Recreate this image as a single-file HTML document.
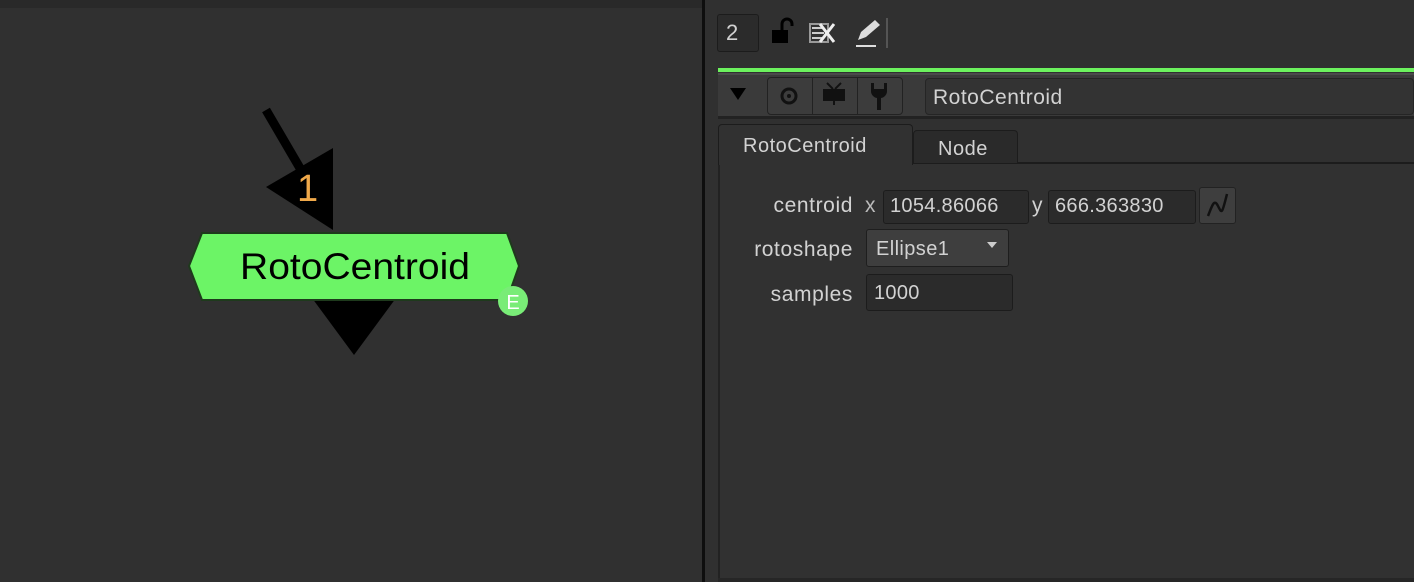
<!DOCTYPE html>
<html><head><style>
*{margin:0;padding:0;box-sizing:border-box}
body{width:1414px;height:582px;background:#303030;position:relative;overflow:hidden;font-family:"Liberation Sans",sans-serif}
.a{position:absolute}
.t{color:#d2d2d2;font-size:21px;letter-spacing:0.6px}
.lab{position:absolute;right:561px;color:#d2d2d2;font-size:21px;letter-spacing:0.6px;text-align:right}
.f{position:absolute;background:#2b2b2b;border:1px solid #1c1c1c;border-radius:3px;color:#d2d2d2;font-size:20px;padding-left:6px;line-height:30px;white-space:nowrap;overflow:hidden;letter-spacing:0.3px}
</style></head><body>
<div class="a" style="left:0;top:0;width:702px;height:8px;background:#292929"></div>
<div class="a" style="left:702px;top:0;width:3px;height:582px;background:#0e0e0e"></div>
<svg class="a" style="left:0;top:0" width="702" height="582">
<line x1="266" y1="110" x2="304" y2="175" stroke="#000" stroke-width="9"/>
<polygon points="266,187 333,148 333,230" fill="#000"/>
<text x="297" y="201" fill="#f0a94a" font-size="38" font-family="Liberation Sans">1</text>
<polygon points="312,298 396,298 354,355" fill="#000"/>
<polygon points="202,233 507,233 519,266 507,300 202,300 189,266" fill="#6cf466" stroke="#1e3a1c" stroke-width="2"/>
<text x="355" y="279" text-anchor="middle" fill="#000" font-size="37" font-family="Liberation Sans" textLength="230" lengthAdjust="spacingAndGlyphs">RotoCentroid</text>
<circle cx="513" cy="301" r="15" fill="#79ec77"/>
<text x="513" y="309" text-anchor="middle" fill="#fff" font-size="20" font-family="Liberation Sans">E</text>
</svg>
<div class="f" style="left:717px;top:14px;width:42px;height:38px;line-height:36px;font-size:22px;padding-left:8px">2</div>
<svg class="a" style="left:768px;top:16px" width="124" height="36">
<rect x="4" y="14" width="16" height="13" fill="#000"/>
<path d="M14 14 V8 a5 5 0 0 1 10 0 V10" stroke="#000" stroke-width="3" fill="none"/>
<rect x="42" y="8" width="18" height="18" fill="none" stroke="#999" stroke-width="2"/>
<path d="M44 12h12M44 17h12M44 22h12" stroke="#ccc" stroke-width="2"/>
<path d="M52 8l14 18M66 8l-14 18" stroke="#eee" stroke-width="3"/>
<path d="M90 24l3-8 14-12 5 5-14 12z" fill="#ddd"/>
<rect x="88" y="29" width="20" height="2" fill="#ddd"/>
<rect x="118" y="2" width="2" height="30" fill="#555"/>
</svg>
<div class="a" style="left:718px;top:68px;width:696px;height:4px;background:#6cf25e"></div>
<div class="a" style="left:718px;top:73px;width:696px;height:46px;background:#3a3a3a;border-top:2px solid #4a4a4a;border-bottom:3px solid #222"></div>
<svg class="a" style="left:728px;top:84px" width="180" height="30">
<polygon points="2,4 18,4 10,16" fill="#000"/>
</svg>
<div class="a" style="left:767px;top:77px;width:136px;height:38px;border:1px solid #222;border-radius:4px;background:#3c3c3c"></div>
<div class="a" style="left:812px;top:78px;width:1px;height:36px;background:#222"></div>
<div class="a" style="left:857px;top:78px;width:1px;height:36px;background:#222"></div>
<svg class="a" style="left:767px;top:77px" width="136" height="38">
<circle cx="22" cy="19" r="7" fill="none" stroke="#111" stroke-width="3"/><circle cx="22" cy="19" r="2" fill="#111"/>
<rect x="56" y="12" width="22" height="12" fill="#111"/><path d="M60 6l6 6M74 6l-6 6M67 24v4" stroke="#111" stroke-width="2"/>
<path d="M104 6v8a7 7 0 0 0 6 7v12h4v-12a7 7 0 0 0 6-7v-8l-3 0v6h-10v-6z" fill="#111"/>
</svg>
<div class="a" style="left:925px;top:78px;width:489px;height:37px;background:#333;border:1px solid #252525;border-radius:4px;color:#d2d2d2;font-size:21px;line-height:37px;padding-left:7px;letter-spacing:0.5px">RotoCentroid</div>
<div class="a" style="left:718px;top:162px;width:696px;height:420px;background:#313131;border-left:2px solid #222;border-top:2px solid #1c1c1c"></div>
<div class="a" style="left:718px;top:124px;width:195px;height:41px;background:#313131;border:1px solid #1c1c1c;border-bottom:none;border-radius:4px 4px 0 0;color:#d2d2d2;font-size:20px;padding:10px 0 0 24px;letter-spacing:0.5px">RotoCentroid</div>
<div class="a" style="left:913px;top:130px;width:105px;height:33px;background:#2a2a2a;border:1px solid #1c1c1c;border-bottom:none;border-radius:4px 4px 0 0;color:#d2d2d2;font-size:20px;padding:7px 0 0 24px;letter-spacing:0.5px">Node</div>
<div class="a" style="left:718px;top:578px;width:696px;height:4px;background:#262626"></div>
<div class="lab" style="top:194px">centroid</div>
<div class="a t" style="left:865px;top:194px;color:#bbb">x</div>
<div class="f" style="left:883px;top:190px;width:146px;height:34px">1054.86066</div>
<div class="a t" style="left:1032px;top:194px">y</div>
<div class="f" style="left:1048px;top:190px;width:148px;height:34px">666.363830</div>
<div class="a" style="left:1199px;top:187px;width:37px;height:37px;background:#3e3e3e;border:1px solid #222;border-radius:3px"></div>
<svg class="a" style="left:1199px;top:187px" width="37" height="37"><path d="M9 29c4-10 6-18 10-10s4 8 9-12" stroke="#111" stroke-width="2.5" fill="none"/></svg>
<div class="lab" style="top:238px">rotoshape</div>
<div class="a" style="left:866px;top:229px;width:143px;height:38px;background:#3e3e3e;border:1px solid #1e1e1e;border-radius:3px;color:#d2d2d2;font-size:20px;line-height:38px;padding-left:9px;letter-spacing:0.4px">Ellipse1</div>
<svg class="a" style="left:985px;top:240px" width="14" height="10"><polygon points="2,2 12,2 7,8" fill="#ccc"/></svg>
<div class="lab" style="top:283px">samples</div>
<div class="f" style="left:866px;top:274px;width:147px;height:37px;line-height:37px;padding-left:7px">1000</div>
</body></html>
